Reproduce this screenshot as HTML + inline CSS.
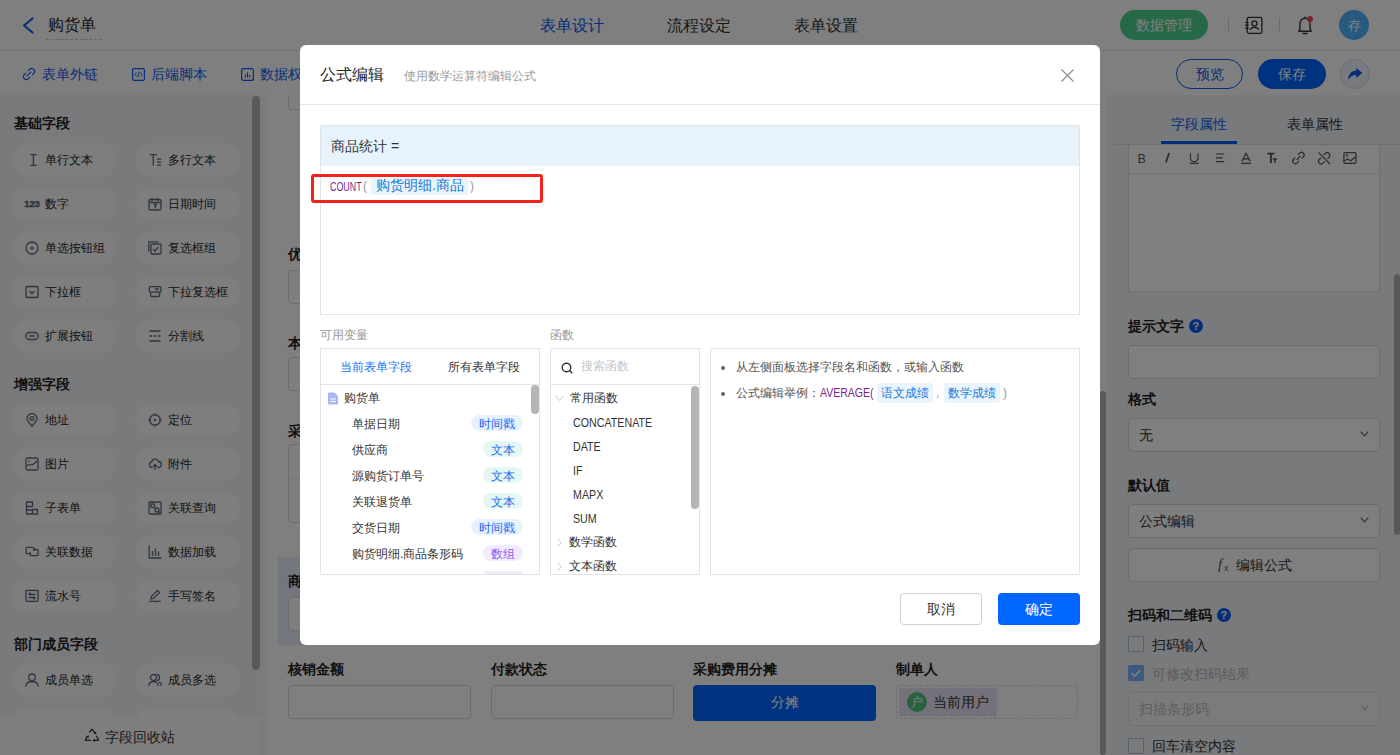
<!DOCTYPE html>
<html><head><meta charset="utf-8">
<style>
*{box-sizing:border-box;margin:0;padding:0}
html,body{width:1400px;height:755px;overflow:hidden;background:#fff;font-family:"Liberation Sans",sans-serif;color:#262626}
.a{position:absolute}
.t{position:absolute;white-space:nowrap;line-height:1}
svg{position:absolute;overflow:visible}
/* header */
#hdr{left:0;top:0;width:1400px;height:51px;border-bottom:1px solid #e6e6e6;background:#fff}
#tb{left:0;top:51px;width:1400px;height:44px;background:#fff}
#side{left:0;top:95px;width:260px;height:660px;background:#f3f4f8}
.sec{position:absolute;left:14px;font-size:14px;font-weight:bold;color:#1f1f1f;line-height:1}
.pill{position:absolute;width:105px;height:34px;border-radius:17px;background:#fdfdfe}
.pill span{position:absolute;left:33px;top:11px;font-size:12px;line-height:1;color:#262626;white-space:nowrap}
.pill svg{left:16px;top:11px}
#foot{left:0;top:717px;width:260px;height:38px;background:#fdfdfd}
#canvas{left:260px;top:95px;width:846px;height:660px;background:#f6f7f9}
#rp{left:1106px;top:96px;width:294px;height:659px;background:#f3f4f8}
.lbl{position:absolute;font-size:14px;font-weight:bold;line-height:1;color:#1f1f1f;white-space:nowrap}
.inp{position:absolute;border:1px solid #d9d9d9;border-radius:4px;background:#fff}
#mask{left:0;top:0;width:1400px;height:755px;background:rgba(0,0,0,.5)}
.tag{position:absolute;height:16px;border-radius:8px;font-size:12px;line-height:18px;text-align:center;white-space:nowrap}
.tb{background:#e8f1fe;color:#1a66f5}.tt{background:#e5f7f5;color:#1a6ef0}.tp{background:#f1ecfd;color:#8d5cf0}
.fn{font-size:12px;color:#333;transform:scaleX(0.89);transform-origin:0 0}
#modal{left:300px;top:45px;width:800px;height:600px;background:#fff;border-radius:6px}
</style></head><body>
<!-- ===== background page ===== -->
<div id="hdr" class="a"></div>
<div id="tb" class="a"></div>
<div id="side" class="a"></div>
<div id="canvas" class="a"></div>
<div id="rp" class="a"></div>
<div id="foot" class="a"></div>

<!-- sidebar -->
<div class="a" style="left:0;top:95px;width:252px;height:622px;overflow:hidden">
<div class="sec" style="top:21px">基础字段</div>
<div class="pill" style="left:12px;top:48px"><svg width="14" height="14" viewBox="0 0 14 14" style="left:13px;top:10px"><path d="M5.2 1.6h6.4M5.2 12.4h6.4M8.4 1.6v10.8" stroke="#5f6a80" fill="none" stroke-width="1.3" stroke-width="1.5"/></svg><span>单行文本</span></div>
<div class="pill" style="left:135px;top:48px"><svg width="14" height="14" viewBox="0 0 14 14" style="left:13px;top:10px"><path d="M1.6 1.6h7.2M5.2 1.6v10.8" stroke="#5f6a80" fill="none" stroke-width="1.3" stroke-width="1.5"/><path d="M9 6.2h4.2M9 9.2h4.2M9 12.2h4.2" stroke="#5f6a80" fill="none" stroke-width="1.3" stroke-width="1.3"/></svg><span>多行文本</span></div>
<div class="pill" style="left:12px;top:92px"><svg width="14" height="14" viewBox="0 0 14 14" style="left:13px;top:10px"><text x="7" y="10.3" font-size="9.6" font-weight="bold" text-anchor="middle" letter-spacing="-0.2" fill="#5f6a80" stroke="#5f6a80" stroke-width="0.5" font-family="Liberation Sans">123</text></svg><span>数字</span></div>
<div class="pill" style="left:135px;top:92px"><svg width="14" height="14" viewBox="0 0 14 14" style="left:13px;top:10px"><rect x="1" y="2.5" width="12" height="10.5" rx="1.5" stroke="#5f6a80" fill="none" stroke-width="1.3"/><path d="M1 5.5h12M4 1v3M10 1v3M5.5 7.5h3l-2 4" stroke="#5f6a80" fill="none" stroke-width="1.3" stroke-width="1.1"/></svg><span>日期时间</span></div>
<div class="pill" style="left:12px;top:136px"><svg width="14" height="14" viewBox="0 0 14 14" style="left:13px;top:10px"><circle cx="7" cy="7" r="6" stroke="#5f6a80" fill="none" stroke-width="1.3"/><circle cx="7" cy="7" r="1.6" fill="#5f6a80"/></svg><span>单选按钮组</span></div>
<div class="pill" style="left:135px;top:136px"><svg width="14" height="14" viewBox="0 0 14 14" style="left:13px;top:10px"><path d="M0.8 10.5V0.8h9.7" stroke="#5f6a80" fill="none" stroke-width="1.3"/><rect x="3" y="3" width="10" height="10" rx="1" stroke="#5f6a80" fill="none" stroke-width="1.3"/><path d="M5 8l2 2 3.5-4" stroke="#5f6a80" fill="none" stroke-width="1.3"/></svg><span>复选框组</span></div>
<div class="pill" style="left:12px;top:180px"><svg width="14" height="14" viewBox="0 0 14 14" style="left:13px;top:10px"><rect x="1" y="1.5" width="12" height="11" rx="1" stroke="#5f6a80" fill="none" stroke-width="1.3"/><path d="M4.5 6l2.5 2.5L9.5 6" stroke="#5f6a80" fill="none" stroke-width="1.3"/></svg><span>下拉框</span></div>
<div class="pill" style="left:135px;top:180px"><svg width="14" height="14" viewBox="0 0 14 14" style="left:13px;top:10px"><rect x="1.3" y="1.6" width="11.6" height="5.6" rx="1.2" stroke="#5f6a80" fill="none" stroke-width="1.3"/><path d="M7.3 3 L8.9 5 L10.5 3" stroke="#5f6a80" fill="none" stroke-width="1.3" stroke-width="1.2"/><path d="M2.6 7.3v3a1.2 1.2 0 0 0 1.2 1.2h6.6a1.2 1.2 0 0 0 1.2-1.2v-3" stroke="#5f6a80" fill="none" stroke-width="1.3"/></svg><span>下拉复选框</span></div>
<div class="pill" style="left:12px;top:224px"><svg width="14" height="14" viewBox="0 0 14 14" style="left:13px;top:10px"><rect x="0.8" y="3.5" width="12.4" height="7" rx="3.5" stroke="#5f6a80" fill="none" stroke-width="1.3"/><path d="M4 7h6" stroke="#5f6a80" fill="none" stroke-width="1.3"/></svg><span>扩展按钮</span></div>
<div class="pill" style="left:135px;top:224px"><svg width="14" height="14" viewBox="0 0 14 14" style="left:13px;top:10px"><path d="M1.5 2h11M1.5 12h11" stroke="#5f6a80" fill="none" stroke-width="1.3"/><path d="M1.5 7h3M6 7h2.5M10 7h2.5" stroke="#5f6a80" fill="none" stroke-width="1.3"/></svg><span>分割线</span></div>
<div class="sec" style="top:282px">增强字段</div>
<div class="pill" style="left:12px;top:308px"><svg width="14" height="14" viewBox="0 0 14 14" style="left:13px;top:10px"><path d="M7 13.2C4 10 2 7.8 2 5.5A5 5 0 0 1 12 5.5C12 7.8 10 10 7 13.2Z" stroke="#5f6a80" fill="none" stroke-width="1.3"/><circle cx="7" cy="5.5" r="1.8" stroke="#5f6a80" fill="none" stroke-width="1.3"/></svg><span>地址</span></div>
<div class="pill" style="left:135px;top:308px"><svg width="14" height="14" viewBox="0 0 14 14" style="left:13px;top:10px"><circle cx="7" cy="7" r="5.3" stroke="#5f6a80" fill="none" stroke-width="1.3"/><circle cx="7" cy="7" r="1.2" fill="#5f6a80"/><path d="M7 0.5v2.5M7 11v2.5M0.5 7h2.5M11 7h2.5" stroke="#5f6a80" fill="none" stroke-width="1.3"/></svg><span>定位</span></div>
<div class="pill" style="left:12px;top:352px"><svg width="14" height="14" viewBox="0 0 14 14" style="left:13px;top:10px"><rect x="1" y="1" width="12" height="12" rx="1.5" stroke="#5f6a80" fill="none" stroke-width="1.3"/><path d="M1.5 9C4 6 6 9 8 7.5S11 4 12.5 4" stroke="#5f6a80" fill="none" stroke-width="1.3" stroke-width="1.1"/><circle cx="4" cy="4.3" r="0.8" fill="#5f6a80"/></svg><span>图片</span></div>
<div class="pill" style="left:135px;top:352px"><svg width="14" height="14" viewBox="0 0 14 14" style="left:13px;top:10px"><path d="M4.5 10.5H3.8A2.8 2.8 0 0 1 3.6 5a3.6 3.6 0 0 1 6.9-.5A2.9 2.9 0 0 1 10.3 10.5H9.5" stroke="#5f6a80" fill="none" stroke-width="1.3"/><path d="M7 13V7.5M5 9.5l2-2 2 2" stroke="#5f6a80" fill="none" stroke-width="1.3"/></svg><span>附件</span></div>
<div class="pill" style="left:12px;top:396px"><svg width="14" height="14" viewBox="0 0 14 14" style="left:13px;top:10px"><path d="M1.5 13V1h6v4.5M1.5 5.5H7.5M1.5 9h6M1.5 13h11V8.5H7.5V13" stroke="#5f6a80" fill="none" stroke-width="1.3"/></svg><span>子表单</span></div>
<div class="pill" style="left:135px;top:396px"><svg width="14" height="14" viewBox="0 0 14 14" style="left:13px;top:10px"><rect x="1" y="1" width="12" height="12" rx="1" stroke="#5f6a80" fill="none" stroke-width="1.3"/><rect x="3" y="3" width="3.5" height="3.5" stroke="#5f6a80" fill="none" stroke-width="1.3" stroke-width="1.1"/><circle cx="9" cy="9" r="2" stroke="#5f6a80" fill="none" stroke-width="1.3" stroke-width="1.1"/><path d="M10.5 10.5l2.5 2.5" stroke="#5f6a80" fill="none" stroke-width="1.3"/></svg><span>关联查询</span></div>
<div class="pill" style="left:12px;top:440px"><svg width="14" height="14" viewBox="0 0 14 14" style="left:13px;top:10px"><path d="M6 8.7H2.3A1.3 1.3 0 0 1 1 7.4V3.7A1.3 1.3 0 0 1 2.3 2.4H7.7A1.3 1.3 0 0 1 9 3.7V6" stroke="#5f6a80" fill="none" stroke-width="1.3"/><path d="M8 4.5H11.7A1.3 1.3 0 0 1 13 5.8V9.4A1.3 1.3 0 0 1 11.7 10.7H6.3A1.3 1.3 0 0 1 5 9.4V7" stroke="#5f6a80" fill="none" stroke-width="1.3"/></svg><span>关联数据</span></div>
<div class="pill" style="left:135px;top:440px"><svg width="14" height="14" viewBox="0 0 14 14" style="left:13px;top:10px"><path d="M1.2 0.5V13h12.3M4.5 6v5M7.5 3.5v7.5M10.5 6.5v4.5" stroke="#5f6a80" fill="none" stroke-width="1.3"/></svg><span>数据加载</span></div>
<div class="pill" style="left:12px;top:484px"><svg width="14" height="14" viewBox="0 0 14 14" style="left:13px;top:10px"><rect x="1" y="1.3" width="12" height="11" rx="0.8" stroke="#5f6a80" fill="none" stroke-width="1.3"/><path d="M3.6 5.5h6.8M3.6 5.5l2.2-1.6M10.4 8.5h-6.8M10.4 8.5l-2.2 1.6" stroke="#5f6a80" fill="none" stroke-width="1.3" stroke-width="1.2"/></svg><span>流水号</span></div>
<div class="pill" style="left:135px;top:484px"><svg width="14" height="14" viewBox="0 0 14 14" style="left:13px;top:10px"><path d="M3 10L3.5 7.5L9.5 1.5L11.5 3.5L5.5 9.5Z" stroke="#5f6a80" fill="none" stroke-width="1.3" stroke-width="1.2"/><path d="M1 13C4 11.5 6 12.5 7.5 12.5S11 11.5 13 12.5" stroke="#5f6a80" fill="none" stroke-width="1.3" stroke-width="1.2"/></svg><span>手写签名</span></div>
<div class="sec" style="top:542px">部门成员字段</div>
<div class="pill" style="left:12px;top:568px"><svg width="14" height="14" viewBox="0 0 14 14" style="left:13px;top:10px"><circle cx="7" cy="4.3" r="3.3" stroke="#5f6a80" fill="none" stroke-width="1.3"/><path d="M1 13.5C1 10 3.7 8.5 7 8.5S13 10 13 13.5" stroke="#5f6a80" fill="none" stroke-width="1.3"/></svg><span>成员单选</span></div>
<div class="pill" style="left:135px;top:568px"><svg width="14" height="14" viewBox="0 0 14 14" style="left:13px;top:10px"><circle cx="5.5" cy="4.5" r="3" stroke="#5f6a80" fill="none" stroke-width="1.3"/><path d="M0.8 13C0.8 10 2.8 8.5 5.5 8.5S10.2 10 10.2 13" stroke="#5f6a80" fill="none" stroke-width="1.3"/><path d="M8.5 1.5a3 3 0 0 1 0 6M11 8.8c1.5.7 2.3 2.2 2.3 4.2" stroke="#5f6a80" fill="none" stroke-width="1.3"/></svg><span>成员多选</span></div>
<div class="pill" style="left:12px;top:612px"><svg width="14" height="14" viewBox="0 0 14 14" style="left:13px;top:10px"><circle cx="7" cy="4.3" r="3.3" stroke="#5f6a80" fill="none" stroke-width="1.3"/><path d="M1 13.5C1 10 3.7 8.5 7 8.5S13 10 13 13.5" stroke="#5f6a80" fill="none" stroke-width="1.3"/></svg><span>成员单选</span></div>
<div class="pill" style="left:135px;top:612px"><svg width="14" height="14" viewBox="0 0 14 14" style="left:13px;top:10px"><circle cx="5.5" cy="4.5" r="3" stroke="#5f6a80" fill="none" stroke-width="1.3"/><path d="M0.8 13C0.8 10 2.8 8.5 5.5 8.5S10.2 10 10.2 13" stroke="#5f6a80" fill="none" stroke-width="1.3"/><path d="M8.5 1.5a3 3 0 0 1 0 6M11 8.8c1.5.7 2.3 2.2 2.3 4.2" stroke="#5f6a80" fill="none" stroke-width="1.3"/></svg><span>成员多选</span></div>
</div>
<!-- /sidebar -->
<!-- scrollbars + footer -->
<div class="a" style="left:252px;top:96px;width:8px;height:574px;border-radius:4px;background:#b3b3b3"></div>
<svg style="left:84px;top:728px" width="16" height="15"><path d="M5.6 4.2 L7.6 1.4 Q8 0.9 8.4 1.4 L10.6 4.8 M12.6 8.2 L14.4 11.6 Q14.6 12.4 13.8 12.4 L9.6 12.4 M6.4 12.4 L2 12.4 Q1.2 12.4 1.5 11.6 L3.3 8.2" fill="none" stroke="#333" stroke-width="1.2" stroke-linecap="round"/><path d="M9.6 5.2 L12.4 6.6 L12 3.6 Z M10.6 10.6 L8.6 12.4 L10.6 14.2 Z M2.2 8.8 L4.9 7.3 L4.6 10.2 Z" fill="#333"/></svg>
<div class="t" style="left:105px;top:730px;font-size:14px;color:#333">字段回收站</div>

<!-- canvas form -->
<div class="a" style="left:268px;top:95px;width:832px;height:660px;background:#fff"></div>
<div class="inp" style="left:288px;top:95px;width:183px;height:15px;border-top:none;border-radius:0 0 4px 4px"></div>
<div class="lbl" style="left:288px;top:247px">优惠金额</div>
<div class="inp" style="left:288px;top:270px;width:183px;height:34px"></div>
<div class="lbl" style="left:288px;top:336px">本次付款</div>
<div class="inp" style="left:288px;top:357px;width:183px;height:34px"></div>
<div class="lbl" style="left:288px;top:424px">采购明细</div>
<div class="inp" style="left:288px;top:444px;width:790px;height:79px"></div>
<div class="a" style="left:288px;top:478px;width:790px;height:1px;background:#e8e8e8"></div>
<div class="a" style="left:278px;top:557px;width:810px;height:88px;background:#e6eefa"></div>
<div class="lbl" style="left:288px;top:574px">商品统计</div>
<div class="inp" style="left:288px;top:597px;width:183px;height:34px"></div>
<div class="lbl" style="left:288px;top:662px">核销金额</div>
<div class="inp" style="left:288px;top:685px;width:183px;height:34px"></div>
<div class="lbl" style="left:491px;top:662px">付款状态</div>
<div class="inp" style="left:491px;top:685px;width:183px;height:34px"></div>
<div class="lbl" style="left:693px;top:662px">采购费用分摊</div>
<div class="a" style="left:693px;top:685px;width:183px;height:36px;border-radius:4px;background:#0066ff"></div>
<div class="t" style="left:771px;top:695px;font-size:14px;color:#fff">分摊</div>
<div class="lbl" style="left:896px;top:662px">制单人</div>
<div class="a" style="left:896px;top:685px;width:182px;height:34px;border:1px dashed #d9d9d9;border-radius:4px"></div>
<div class="a" style="left:899px;top:688px;width:98px;height:28px;border-radius:2px;background:#ebe3f5"></div>
<div class="a" style="left:907px;top:692px;width:20px;height:20px;border-radius:10px;background:#52c483"></div>
<div class="t" style="left:911px;top:696px;font-size:12px;color:#fff">户</div>
<div class="t" style="left:933px;top:695px;font-size:14px;color:#333">当前用户</div>
<div class="a" style="left:1100px;top:95px;width:6px;height:660px;background:#fff"></div>
<div class="a" style="left:1100px;top:391px;width:6px;height:364px;border-radius:3px;background:#b3b3b3"></div>

<!-- right panel -->
<div class="a" style="left:1106px;top:95px;width:294px;height:660px;background:#f2f4f9"></div>
<div class="t" style="left:1171px;top:117px;font-size:14px;color:#0a5cf0">字段属性</div>
<div class="t" style="left:1287px;top:117px;font-size:14px;color:#333">表单属性</div>
<div class="a" style="left:1114px;top:144px;width:286px;height:1px;background:#d9dce3"></div>
<div class="a" style="left:1161px;top:141px;width:76px;height:3px;background:#0a5cf0"></div>
<div class="a" style="left:1128px;top:145px;width:252px;height:147px;border:1px solid #dfe1e6;border-top:none;background:#fff"></div>
<div class="a" style="left:1128px;top:173px;width:252px;height:1px;background:#e3e5ea"></div>
<svg style="left:1128px;top:144px" width="252" height="30" id="rtb">
 <text x="9.6" y="19" font-size="12.5" fill="#555" font-family="Liberation Sans">B</text>
 <path d="M41 9 L38 18.5" stroke="#555" stroke-width="1.7"/>
 <path d="M62.5 9.3v4.6a3.75 3.75 0 0 0 7.5 0v-4.6M61.8 19.4h9" fill="none" stroke="#555" stroke-width="1.2"/>
 <path d="M88 10h8.2M88 13.9h6.5M88 17.6h8.2" stroke="#555" stroke-width="1.1"/>
 <path d="M113.8 17.5 L118 9.3 L122.2 17.5 M115.3 14.8h5.4 M113 19.4h10" fill="none" stroke="#555" stroke-width="1.2"/>
 <path d="M139.3 9.6h7.2M142.9 9.6v9.3" fill="none" stroke="#555" stroke-width="1.9"/><path d="M144.8 15h4.2M146.9 15v3.9" fill="none" stroke="#555" stroke-width="1.3"/>
 <g transform="rotate(-45 170.5 14)"><path d="M168.5 11.4 H166.2 A2.6 2.6 0 0 0 166.2 16.6 H168.5 M172.5 11.4 H174.8 A2.6 2.6 0 0 1 174.8 16.6 H172.5 M168 14 H173" fill="none" stroke="#555" stroke-width="1.2"/></g>
 <g transform="rotate(-45 196.2 14.3)"><path d="M194.2 11.7 H191.9 A2.6 2.6 0 0 0 191.9 16.9 H194.2 M198.2 11.7 H200.5 A2.6 2.6 0 0 1 200.5 16.9 H198.2" fill="none" stroke="#555" stroke-width="1.2"/></g><path d="M190.5 8.3 L202 20" stroke="#555" stroke-width="1.2"/>
 <rect x="215.9" y="8.6" width="12" height="10.8" rx="1.2" fill="none" stroke="#555" stroke-width="1.2"/><path d="M216.2 17.3 L219.5 15 L222.7 16.8 L227.6 12.8" fill="none" stroke="#555" stroke-width="1.1"/><circle cx="218.8" cy="11.4" r="1" fill="none" stroke="#555" stroke-width="0.9"/>
</svg>
<div class="lbl" style="left:1128px;top:319px">提示文字</div>
<div class="a" style="left:1189px;top:319px;width:14px;height:14px;border-radius:7px;background:#0a5cf0"></div>
<div class="t" style="left:1192.5px;top:320.5px;font-size:11px;font-weight:bold;color:#fff">?</div>
<div class="inp" style="left:1128px;top:345px;width:252px;height:34px"></div>
<div class="lbl" style="left:1128px;top:392px">格式</div>
<div class="inp" style="left:1128px;top:418px;width:252px;height:34px"></div>
<div class="t" style="left:1139px;top:428px;font-size:14px;color:#333">无</div>
<svg style="left:1360px;top:431px" width="10" height="7"><path d="M0.7 0.7 L4.5 4.8 L8.3 0.7" fill="none" stroke="#666" stroke-width="1.2"/></svg>
<div class="lbl" style="left:1128px;top:478px">默认值</div>
<div class="inp" style="left:1128px;top:504px;width:252px;height:34px"></div>
<div class="t" style="left:1139px;top:514px;font-size:14px;color:#333">公式编辑</div>
<svg style="left:1360px;top:517px" width="10" height="7"><path d="M0.7 0.7 L4.5 4.8 L8.3 0.7" fill="none" stroke="#666" stroke-width="1.2"/></svg>
<div class="inp" style="left:1128px;top:548px;width:252px;height:34px"></div>
<div class="t" style="left:1218px;top:557px;font-size:15px;font-style:italic;color:#555;font-family:'Liberation Serif',serif">f</div>
<div class="t" style="left:1224px;top:564px;font-size:9px;color:#555">x</div>
<div class="t" style="left:1236px;top:558px;font-size:14px;color:#333">编辑公式</div>
<div class="lbl" style="left:1128px;top:608px">扫码和二维码</div>
<div class="a" style="left:1217px;top:608px;width:14px;height:14px;border-radius:7px;background:#0a5cf0"></div>
<div class="t" style="left:1220.5px;top:609.5px;font-size:11px;font-weight:bold;color:#fff">?</div>
<div class="a" style="left:1128px;top:636px;width:16px;height:16px;border:1px solid #b5bccb;border-radius:1px;background:transparent"></div>
<div class="t" style="left:1152px;top:638px;font-size:14px;color:#333">扫码输入</div>
<div class="a" style="left:1128px;top:665px;width:16px;height:16px;border-radius:2px;background:#78b4ff"></div>
<svg style="left:1128px;top:665px" width="16" height="16"><path d="M3.5 8 L6.5 11 L12.5 5" fill="none" stroke="#fff" stroke-width="1.6"/></svg>
<div class="t" style="left:1152px;top:667px;font-size:14px;color:#b8b8b8">可修改扫码结果</div>
<div class="inp" style="left:1128px;top:692px;width:252px;height:34px;background:#f7f7f7;border-color:#e2e2e2"></div>
<div class="t" style="left:1139px;top:702px;font-size:14px;color:#bbb">扫描条形码</div>
<svg style="left:1360px;top:705px" width="10" height="7"><path d="M0.7 0.7 L4.5 4.8 L8.3 0.7" fill="none" stroke="#bbb" stroke-width="1.2"/></svg>
<div class="a" style="left:1128px;top:738px;width:16px;height:16px;border:1px solid #b5bccb;border-radius:1px;background:transparent"></div>
<div class="t" style="left:1152px;top:739px;font-size:14px;color:#333">回车清空内容</div>
<div class="a" style="left:1394px;top:274px;width:6px;height:261px;border-radius:3px;background:#b3b3b3"></div>

<!-- header content -->
<svg style="left:0;top:0" width="40" height="50"><path d="M32.5 18.5 L24 25.5 L32.5 32.5" fill="none" stroke="#0a5cf0" stroke-width="2.2" stroke-linecap="round" stroke-linejoin="round"/></svg>
<div class="t" style="left:48px;top:17px;font-size:16px;color:#262626">购货单</div>
<div class="a" style="left:46px;top:39px;width:56px;border-top:1px dashed #c8c8c8"></div>
<div class="t" style="left:540px;top:18px;font-size:16px;color:#0a5cf0">表单设计</div>
<div class="t" style="left:667px;top:18px;font-size:16px;color:#333">流程设定</div>
<div class="t" style="left:794px;top:18px;font-size:16px;color:#333">表单设置</div>
<div class="a" style="left:1120px;top:10px;width:88px;height:30px;border-radius:15px;background:#4dd292"></div>
<div class="t" style="left:1136px;top:18px;font-size:14px;color:#fff">数据管理</div>
<div class="a" style="left:1228px;top:18px;width:1px;height:14px;background:#d6d6d6"></div>
<div class="a" style="left:1279px;top:18px;width:1px;height:14px;background:#d6d6d6"></div>
<svg style="left:1243px;top:15px" width="22" height="22"><rect x="4.3" y="2.3" width="14.6" height="16" rx="1.6" fill="none" stroke="#333" stroke-width="1.3"/><circle cx="11.4" cy="8.4" r="2.5" fill="none" stroke="#333" stroke-width="1.3"/><path d="M7.3 15 C7.9 11.6 14.9 11.6 15.5 15" fill="none" stroke="#333" stroke-width="1.3"/><path d="M2 7.5h3.8M2 10.2h3.8M2 13.2h3.8" stroke="#333" stroke-width="1.2"/></svg>
<svg style="left:1294px;top:14px" width="22" height="22"><path d="M4.8 17.3 C5.6 16.4 6 15.5 6 13 V9.8 C6 6.4 8.3 4.3 11 4.3 C13.7 4.3 16 6.4 16 9.8 V13 C16 15.5 16.4 16.4 17.2 17.3 Z" fill="none" stroke="#333" stroke-width="1.4" stroke-linejoin="round"/><path d="M9 19.5 h4" stroke="#333" stroke-width="1.4" stroke-linecap="round"/><path d="M11 2.6v1.6" stroke="#333" stroke-width="1.3"/><circle cx="16" cy="5" r="3" fill="#f04848"/></svg>
<div class="a" style="left:1339px;top:10px;width:30px;height:30px;border-radius:15px;background:#50b2ff"></div>
<div class="t" style="left:1347.5px;top:19px;font-size:13px;color:#fff">存</div>

<!-- toolbar -->
<svg style="left:22px;top:67px" width="14" height="14"><path d="M5.2 8.8 L8.8 5.2 M6.3 3.6 L7.6 2.3 A2.6 2.6 0 0 1 11.7 6.4 L10.4 7.7 M7.7 10.4 L6.4 11.7 A2.6 2.6 0 0 1 2.3 7.6 L3.6 6.3" fill="none" stroke="#0a5cf0" stroke-width="1.2" stroke-linecap="round"/></svg>
<div class="t" style="left:42px;top:67px;font-size:14px;color:#0a5cf0">表单外链</div>
<svg style="left:132px;top:68px" width="13" height="13"><rect x="0.6" y="0.6" width="11.8" height="11.8" rx="1.5" fill="none" stroke="#0a5cf0" stroke-width="1.2"/><path d="M4.5 4.5 L2.8 6.5 L4.5 8.5 M8.5 4.5 L10.2 6.5 L8.5 8.5 M7.3 3.8 L5.7 9.2" fill="none" stroke="#0a5cf0" stroke-width="1"/></svg>
<div class="t" style="left:151px;top:67px;font-size:14px;color:#0a5cf0">后端脚本</div>
<svg style="left:241px;top:68px" width="13" height="13"><rect x="0.6" y="0.6" width="11.8" height="11.8" rx="2" fill="none" stroke="#0a5cf0" stroke-width="1.2"/><path d="M4.3 6.5v3M6.5 4.5v5M8.7 7v2.5" stroke="#0a5cf0" stroke-width="1.1"/></svg>
<div class="t" style="left:260px;top:67px;font-size:14px;color:#0a5cf0">数据权限</div>
<div class="a" style="left:1176px;top:59px;width:67px;height:30px;border-radius:15px;border:1px solid #0a5cf0;background:#fff"></div>
<div class="t" style="left:1196px;top:67px;font-size:14px;color:#0a5cf0">预览</div>
<div class="a" style="left:1258px;top:59px;width:68px;height:30px;border-radius:15px;background:#0066ff"></div>
<div class="t" style="left:1278px;top:67px;font-size:14px;color:#fff">保存</div>
<div class="a" style="left:1340px;top:59px;width:30px;height:30px;border-radius:15px;border:1px solid #d0dcf0;background:#f1f5fc"></div>
<svg style="left:1346px;top:65px" width="18" height="18"><path d="M2 15 C2.3 9 5.8 5.6 10.3 5.5 V2.8 L16.2 7.9 L10.3 13 V10.1 C6.8 10.1 4.2 11.6 2 15 Z" fill="#0a5cf0"/></svg>

<div id="mask" class="a"></div>
<div id="modal" class="a"></div>
<!-- modal content (absolute page coords) -->
<div class="t" style="left:320px;top:67px;font-size:16px;color:#262626">公式编辑</div>
<div class="t" style="left:404px;top:70px;font-size:12px;color:#999">使用数学运算符编辑公式</div>
<svg style="left:1061px;top:69px" width="13" height="13"><path d="M0.5 0.5 L12.5 12.5 M12.5 0.5 L0.5 12.5" stroke="#8c8c8c" stroke-width="1.2"/></svg>
<div class="a" style="left:300px;top:104px;width:800px;height:1px;background:#e8e8e8"></div>

<div class="a" style="left:320px;top:125px;width:760px;height:190px;border:1px solid #e3e3e3"></div>
<div class="a" style="left:321px;top:126px;width:758px;height:40px;background:#e6f3fd"></div>
<div class="t" style="left:331px;top:139px;font-size:14px;color:#333">商品统计 =</div>
<div class="t" style="left:330px;top:181px;font-size:12px;color:#7a1f8c;transform:scaleX(0.74);transform-origin:0 0">COUNT</div>
<div class="t" style="left:363px;top:180px;font-size:12px;color:#999">(</div>
<div class="a" style="left:371px;top:178px;width:97px;height:17px;border-radius:2px;background:#eaf4fd"></div>
<div class="t" style="left:376px;top:178px;font-size:14px;color:#1a7ad8">购货明细.商品</div>
<div class="t" style="left:470px;top:180px;font-size:12px;color:#999">)</div>
<div class="a" style="left:311px;top:174px;width:232px;height:29px;border:3px solid #f5221b;border-radius:3px"></div>

<div class="t" style="left:320px;top:329px;font-size:12px;color:#999">可用变量</div>
<div class="a" style="left:320px;top:348px;width:220px;height:227px;border:1px solid #e3e3e3"></div>
<div class="t" style="left:340px;top:361px;font-size:12px;color:#1f6ff5">当前表单字段</div>
<div class="t" style="left:448px;top:361px;font-size:12px;color:#333">所有表单字段</div>
<div class="a" style="left:321px;top:384px;width:218px;height:1px;background:#e3e3e3"></div>
<div class="a" style="left:531px;top:385px;width:8px;height:29px;border-radius:4px;background:#b5b5b5"></div>
<svg style="left:327px;top:392px" width="12" height="13"><path d="M1 1.5 Q1 0.5 2 0.5 H7.5 L11 4 V11.5 Q11 12.5 10 12.5 H2 Q1 12.5 1 11.5 Z" fill="#a9b5f5"/><path d="M3.2 7h5.6M3.2 9.5h5.6" stroke="#fff" stroke-width="1"/></svg>
<div class="t" style="left:344px;top:392px;font-size:12px;color:#333">购货单</div>
<div class="t" style="left:352px;top:418px;font-size:12px;color:#333">单据日期</div>
<div class="t" style="left:352px;top:444px;font-size:12px;color:#333">供应商</div>
<div class="t" style="left:352px;top:470px;font-size:12px;color:#333">源购货订单号</div>
<div class="t" style="left:352px;top:496px;font-size:12px;color:#333">关联退货单</div>
<div class="t" style="left:352px;top:522px;font-size:12px;color:#333">交货日期</div>
<div class="t" style="left:352px;top:548px;font-size:12px;color:#333">购货明细.商品条形码</div>
<div class="tag tb" style="left:471px;top:415px;width:52px">时间戳</div>
<div class="tag tt" style="left:483px;top:441px;width:40px">文本</div>
<div class="tag tt" style="left:483px;top:467px;width:40px">文本</div>
<div class="tag tt" style="left:483px;top:493px;width:40px">文本</div>
<div class="tag tb" style="left:471px;top:519px;width:52px">时间戳</div>
<div class="tag tp" style="left:483px;top:545px;width:40px">数组</div>
<div class="a" style="left:483px;top:571px;width:40px;height:3px;border-radius:8px 8px 0 0;background:#f1ecfd"></div>

<div class="t" style="left:550px;top:329px;font-size:12px;color:#999">函数</div>
<div class="a" style="left:550px;top:348px;width:150px;height:227px;border:1px solid #e3e3e3"></div>
<svg style="left:561px;top:362px" width="13" height="13"><circle cx="5.5" cy="5.5" r="4.3" fill="none" stroke="#333" stroke-width="1.4"/><path d="M8.5 8.5 L11.3 11.3" stroke="#333" stroke-width="1.5"/></svg>
<div class="t" style="left:581px;top:360px;font-size:12px;color:#c4c7cf">搜索函数</div>
<div class="a" style="left:551px;top:384px;width:148px;height:1px;background:#e3e3e3"></div>
<div class="a" style="left:691px;top:386px;width:8px;height:123px;border-radius:4px;background:#b5b5b5"></div>
<svg style="left:554px;top:394px" width="12" height="9"><path d="M1 1.5 L5.3 6.5 L9.6 1.5" fill="none" stroke="#c8c8c8" stroke-width="1"/></svg>
<div class="t" style="left:570px;top:392px;font-size:12px;color:#333">常用函数</div>
<div class="t fn" style="left:573px;top:417px">CONCATENATE</div>
<div class="t fn" style="left:573px;top:441px">DATE</div>
<div class="t fn" style="left:573px;top:465px">IF</div>
<div class="t fn" style="left:573px;top:489px">MAPX</div>
<div class="t fn" style="left:573px;top:513px">SUM</div>
<svg style="left:556px;top:538px" width="8" height="10"><path d="M1.5 1 L5.5 4.8 L1.5 8.6" fill="none" stroke="#c8c8c8" stroke-width="1"/></svg>
<div class="t" style="left:569px;top:536px;font-size:12px;color:#333">数学函数</div>
<div class="a" style="left:551px;top:549px;width:148px;height:25px;overflow:hidden">
<svg style="left:5px;top:13px" width="8" height="10"><path d="M1.5 1 L5.5 4.8 L1.5 8.6" fill="none" stroke="#c8c8c8" stroke-width="1"/></svg>
<div class="t" style="left:18px;top:11px;font-size:12px;color:#333">文本函数</div>
</div>

<div class="a" style="left:710px;top:348px;width:370px;height:227px;border:1px solid #e3e3e3"></div>
<div class="a" style="left:721px;top:366.3px;width:4px;height:4px;border-radius:50%;background:#5d6675"></div>
<div class="t" style="left:736px;top:361px;font-size:12px;color:#555">从左侧面板选择字段名和函数，或输入函数</div>
<div class="a" style="left:721px;top:392px;width:4px;height:4px;border-radius:50%;background:#5d6675"></div>
<div class="t" style="left:736px;top:387px;font-size:12px;color:#555">公式编辑举例：</div>
<div class="t" style="left:820px;top:387px;font-size:12px;color:#7a1f8c;transform:scaleX(0.875);transform-origin:0 0">AVERAGE(</div>
<div class="a" style="left:877px;top:383px;width:56px;height:20px;border-radius:3px;background:#eaf4fd"></div>
<div class="t" style="left:881px;top:387px;font-size:12px;color:#1a7ad8">语文成绩</div>
<div class="t" style="left:936px;top:387px;font-size:12px;color:#999">,</div>
<div class="a" style="left:944px;top:383px;width:56px;height:20px;border-radius:3px;background:#eaf4fd"></div>
<div class="t" style="left:948px;top:387px;font-size:12px;color:#1a7ad8">数学成绩</div>
<div class="t" style="left:1003px;top:387px;font-size:12px;color:#999">)</div>

<div class="a" style="left:900px;top:593px;width:82px;height:32px;border:1px solid #d0d0d0;border-radius:4px;background:#fff"></div>
<div class="t" style="left:927px;top:602px;font-size:14px;color:#333">取消</div>
<div class="a" style="left:998px;top:593px;width:82px;height:32px;border-radius:4px;background:#0066ff"></div>
<div class="t" style="left:1025px;top:602px;font-size:14px;color:#fff;font-weight:500">确定</div>
</body></html>
